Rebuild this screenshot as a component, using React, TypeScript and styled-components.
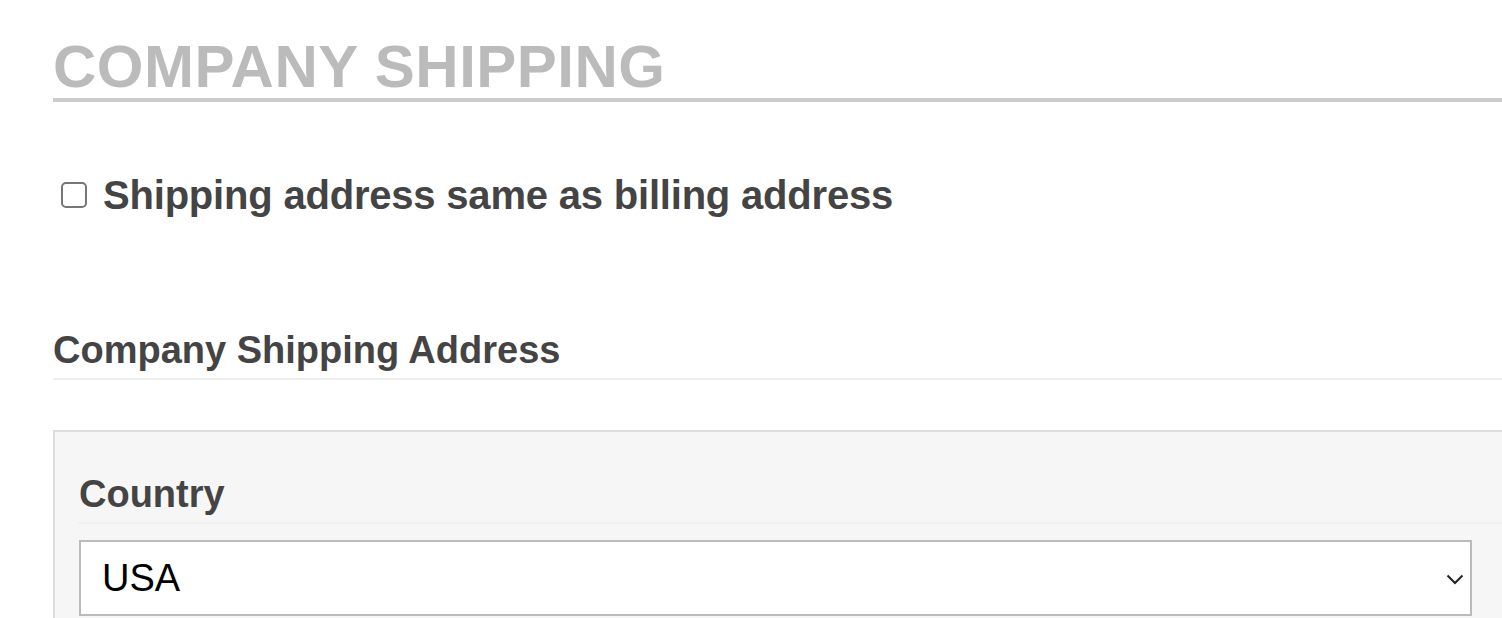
import React from "react";
import styled, { createGlobalStyle } from "styled-components";

const GlobalStyle = createGlobalStyle`
  html, body {
    margin: 0;
    padding: 0;
    background: #ffffff;
    overflow: hidden;
  }
  body {
    font-family: "Liberation Sans", Arial, Helvetica, sans-serif;
  }
`;

const Page = styled.div`
  width: 1462px;
  padding-left: 53px;
  padding-top: 36px;
`;

const Title = styled.h1`
  margin: 0;
  font-size: 60px;
  line-height: 62px;
  font-weight: 700;
  letter-spacing: 0.5px;
  color: #bbbbbb;
  border-bottom: 4px solid #cccccc;
`;

const CheckRow = styled.label`
  display: flex;
  align-items: center;
  gap: 16px;
  margin-top: 70px;
  padding-left: 8px;
  cursor: pointer;
`;

const Check = styled.input`
  appearance: none;
  -webkit-appearance: none;
  margin: 0;
  width: 26px;
  height: 26px;
  box-sizing: border-box;
  border: 2px solid #767676;
  border-radius: 5px;
  background: #ffffff;
  flex: none;
`;

const CheckText = styled.span`
  font-size: 40px;
  line-height: 46px;
  font-weight: 700;
  letter-spacing: -0.2px;
  color: #444444;
`;

const SectionHeading = styled.h3`
  margin: 110px 0 0;
  font-size: 38px;
  line-height: 44px;
  font-weight: 700;
  color: #444444;
  padding-bottom: 6px;
  border-bottom: 2px solid #eeeeee;
`;

const Panel = styled.div`
  margin-top: 50px;
  border: 2px solid #dddddd;
  background: #f6f6f6;
  padding: 40px 0 40px 24px;
`;

const FieldLabel = styled.div`
  font-size: 38px;
  line-height: 44px;
  font-weight: 700;
  color: #444444;
  padding-bottom: 6px;
  border-bottom: 2px solid #eeeeee;
`;

const SelectWrap = styled.div`
  position: relative;
  margin-top: 16px;
  width: 1393px;
`;

const Select = styled.select`
  appearance: none;
  -webkit-appearance: none;
  display: block;
  width: 100%;
  height: 76px;
  box-sizing: border-box;
  border: 2px solid #bbbbbb;
  border-radius: 0;
  background: #ffffff;
  padding: 0 60px 0 21px;
  font-family: "Liberation Sans", Arial, Helvetica, sans-serif;
  font-size: 38px;
  color: #000000;
  outline: none;
`;

const Chevron = styled.svg`
  position: absolute;
  right: 8px;
  top: 50%;
  width: 18px;
  height: 11px;
  margin-top: -4px;
  pointer-events: none;
`;

export default function App() {
  return (
    <>
      <GlobalStyle />
      <Page>
        <Title>COMPANY SHIPPING</Title>
        <CheckRow>
          <Check type="checkbox" />
          <CheckText>Shipping address same as billing address</CheckText>
        </CheckRow>
        <SectionHeading>Company Shipping Address</SectionHeading>
        <Panel>
          <FieldLabel>Country</FieldLabel>
          <SelectWrap>
            <Select defaultValue="USA">
              <option value="USA">USA</option>
              <option value="Canada">Canada</option>
            </Select>
            <Chevron viewBox="0 0 18 11">
              <path d="M1.5 1.5 L9 9 L16.5 1.5" fill="none" stroke="#222" strokeWidth="2" />
            </Chevron>
          </SelectWrap>
        </Panel>
      </Page>
    </>
  );
}
